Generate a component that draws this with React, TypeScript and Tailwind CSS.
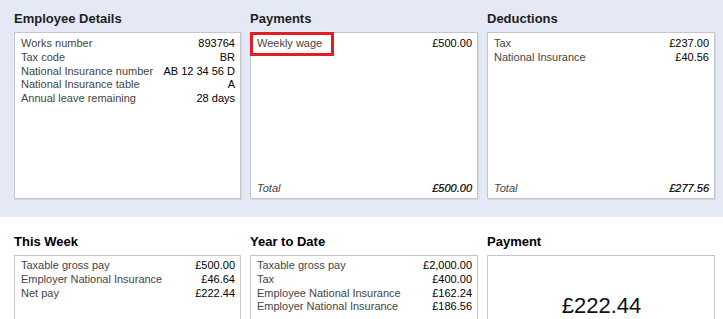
const font = { fontFamily: '"Liberation Sans", Arial, sans-serif' };

type Row = [string, string];

function Rows({ rows }: { rows: Row[] }) {
  return (
    <div className="flex flex-col">
      {rows.map(([label, value]) => (
        <div key={label} className="flex justify-between text-[11px] leading-[13.75px]">
          <span className="text-[#454545]">{label}</span>
          <span className="text-black">{value}</span>
        </div>
      ))}
    </div>
  );
}

function Panel({
  title,
  rows,
  total,
  highlight,
}: {
  title: string;
  rows: Row[];
  total?: string;
  highlight?: boolean;
}) {
  return (
    <div className="flex flex-col">
      <h2 className="text-[13px] leading-[16px] font-bold text-[#1e1e1e] mb-[5px]">{title}</h2>
      <div className="relative h-[167px] flex flex-col bg-white border border-[#c3c6cc] shadow-[1px_1px_0_#d3d8e2] pl-[6px] pr-[5px] pt-[4px] pb-[2px]">
        <Rows rows={rows} />
        {total && (
          <div className="mt-auto flex justify-between text-[11px] leading-[13.75px] italic">
            <span className="text-[#454545]">Total</span>
            <span className="text-black [-webkit-text-stroke:0.2px_black]">{total}</span>
          </div>
        )}
        {highlight && (
          <div className="absolute -left-px -top-px w-[84px] h-[24px] border-[3px] border-[#e21d26]" />
        )}
      </div>
    </div>
  );
}

function LowerPanel({ title, children }: { title: string; children: React.ReactNode }) {
  return (
    <div className="flex flex-col">
      <h2 className="text-[13px] leading-[16px] font-bold text-black mb-[5px]">{title}</h2>
      <div className="h-[110px] bg-white border border-[#c3c6cc] pl-[6px] pr-[5px] pt-[3px]">
        {children}
      </div>
    </div>
  );
}

export default function App() {
  return (
    <div className="w-[723px] h-[319px] overflow-hidden bg-white" style={font}>
      {/* Top band */}
      <div className="bg-[#e4e9f5] h-[217px] pt-[11px] pl-[14px] pr-[8px] grid grid-cols-[227px_228px_228px] gap-[9px]">
        <Panel
          title="Employee Details"
          rows={[
            ['Works number', '893764'],
            ['Tax code', 'BR'],
            ['National Insurance number', 'AB 12 34 56 D'],
            ['National Insurance table', 'A'],
            ['Annual leave remaining', '28 days'],
          ]}
        />
        <Panel title="Payments" rows={[['Weekly wage', '£500.00']]} total="£500.00" highlight />
        <Panel
          title="Deductions"
          rows={[
            ['Tax', '£237.00'],
            ['National Insurance', '£40.56'],
          ]}
          total="£277.56"
        />
      </div>

      {/* Lower section */}
      <div className="pt-[17px] pl-[14px] pr-[8px] grid grid-cols-[227px_228px_228px] gap-[9px]">
        <LowerPanel title="This Week">
          <Rows
            rows={[
              ['Taxable gross pay', '£500.00'],
              ['Employer National Insurance', '£46.64'],
              ['Net pay', '£222.44'],
            ]}
          />
        </LowerPanel>
        <LowerPanel title="Year to Date">
          <Rows
            rows={[
              ['Taxable gross pay', '£2,000.00'],
              ['Tax', '£400.00'],
              ['Employee National Insurance', '£162.24'],
              ['Employer National Insurance', '£186.56'],
            ]}
          />
        </LowerPanel>
        <LowerPanel title="Payment">
          <div className="pt-[35px] text-center text-[22px] leading-[24px] text-[#111]">£222.44</div>
        </LowerPanel>
      </div>
    </div>
  );
}
